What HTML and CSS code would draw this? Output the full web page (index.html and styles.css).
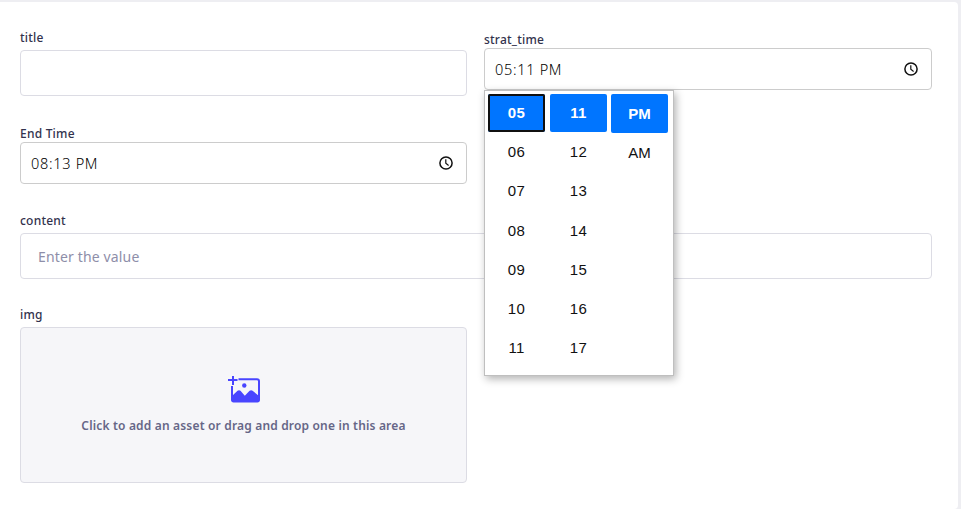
FILE: index.html
```html
<!DOCTYPE html>
<html lang="en">
<head>
<meta charset="utf-8">
<title>Edit entry</title>
<link rel="stylesheet" href="styles.css">
</head>
<body>
<main class="card">
  <form class="form">
    <div class="field field-title">
      <label class="label">title</label>
      <div class="input"></div>
    </div>
    <div class="field field-start">
      <label class="label">strat_time</label>
      <div class="time"><span>05:11 PM</span>
        <svg class="clock" viewBox="0 0 16 16"><circle cx="8" cy="8" r="6.1"/><path d="M7.8 4.3v4l2.8 2.1"/></svg>
      </div>
      <div class="picker">
        <div class="column">
          <div class="cell selected focused">05</div><div class="cell">06</div><div class="cell">07</div><div class="cell">08</div><div class="cell">09</div><div class="cell">10</div><div class="cell">11</div>
        </div>
        <div class="column">
          <div class="cell selected">11</div><div class="cell">12</div><div class="cell">13</div><div class="cell">14</div><div class="cell">15</div><div class="cell">16</div><div class="cell">17</div>
        </div>
        <div class="column period">
          <div class="cell selected">PM</div><div class="cell">AM</div>
        </div>
      </div>
    </div>
    <div class="field field-end">
      <label class="label">End Time</label>
      <div class="time"><span>08:13 PM</span>
        <svg class="clock" viewBox="0 0 16 16"><circle cx="8" cy="8" r="6.1"/><path d="M7.8 4.3v4l2.8 2.1"/></svg>
      </div>
    </div>
    <div class="field field-content">
      <label class="label">content</label>
      <div class="input"><span class="placeholder">Enter the value</span></div>
    </div>
    <div class="field field-img">
      <label class="label">img</label>
      <div class="drop">
        <svg class="asset" viewBox="0 0 34 28"><path class="fill" d="M4 1h2v3h3.5v2H6v4H4V6H0V4h4z"/><path class="frame" d="M10.5 4.2H29a2 2 0 0 1 2 2V25a1.5 1.5 0 0 1-1.5 1.5h-24A1.5 1.5 0 0 1 4 25V11"/><circle class="fill" cx="16.3" cy="10.5" r="2.2"/><path class="fill" d="M4 21l5.5-5.2q1.5-1.2 3 0l4.3 5 4.8-5q1.500-1.200 3 0L31 21v4.500l-1.500 1.500h-24L4 25.500z"/></svg>
        <span class="hint">Click to add an asset or drag and drop one in this area</span>
      </div>
    </div>
  </form>
</main>
</body>
</html>
```

FILE: styles.css
```css
* { box-sizing: border-box; }
body {
  margin: 0;
  height: 509px;
  overflow: hidden;
  background: #eeeef2;
  font-family: "Noto Sans", "Open Sans", sans-serif;
  color: #32324d;
}
.card {
  width: 958px;
  height: 507px;
  margin-top: 2px;
  padding: 26px 26px 0 20px;
  background: #fff;
  border-radius: 0 4px 4px 0;
}
.form {
  display: grid;
  grid-template-columns: 447px 448px;
  grid-template-rows: 96px 91px 94px 161px;
  column-gap: 17px;
}
.field { position: relative; }
.field-content { grid-column: 1 / 3; }
.label {
  display: block;
  height: 16px;
  line-height: 18px;
  font-size: 12px;
  font-weight: 500;
  letter-spacing: .22px;
  white-space: nowrap;
}
.field-title .label { margin: 1px 0 5px; }
.field-start .label { margin: 3px 0 1px; }
.field-end .label { margin: 1px 0; }
.field-content .label { margin-bottom: 5px; margin-top: -3px; }
.field-img .label { margin-bottom: 5px; margin-top: -3px; }
.input {
  display: flex;
  align-items: center;
  height: 46px;
  padding: 0 17px;
  border: 1px solid #dcdce4;
  border-radius: 4px;
  background: #fff;
}
.placeholder { font-size: 14px; letter-spacing: .15px; color: #8e8ea9; }
.time {
  display: flex;
  align-items: center;
  justify-content: space-between;
  height: 42px;
  padding: 0 12px 0 10px;
  border: 1px solid #ccc;
  border-radius: 4px;
  background: #fff;
  color: #000;
  font-size: 14.5px;
  font-weight: 350;
  letter-spacing: .7px;
}
.clock { width: 16px; height: 16px; fill: none; stroke: #111; stroke-width: 1.5; }
.clock path { stroke-width: 1.2; }
.picker {
  position: absolute;
  z-index: 2;
  top: 62px;
  left: 0;
  display: flex;
  gap: 5px;
  width: 190px;
  height: 286px;
  padding: 3px;
  border: 1px solid #bfbfbf;
  background: #fff;
  box-shadow: 2px 3px 8px rgba(0, 0, 0, .3);
  color: #111;
  font: 15px "Liberation Sans", sans-serif;
}
.column { display: flex; flex-direction: column; gap: 1.2px; width: 57px; }
.column.period { margin-left: -1px; }
.cell {
  height: 38px;
  line-height: 38px;
  text-align: center;
  border-radius: 2px;
  letter-spacing: .3px;
}
.period .cell { height: 39px; line-height: 40px; letter-spacing: 0; }
.period .cell:not(.selected) { line-height: 38px; }
.selected { background: #0075ff; color: #fff; font-weight: 700; }
.focused { box-shadow: inset 0 0 0 2px #101010; }
.drop {
  display: flex;
  flex-direction: column;
  align-items: center;
  height: 156px;
  padding-top: 47px;
  border: 1px solid #dcdce4;
  border-radius: 4px;
  background: #f6f6f9;
}
.asset { width: 34px; height: 28px; margin-left: 2px; }
.asset .fill { fill: #4945ff; }
.asset .frame { fill: none; stroke: #4945ff; stroke-width: 2; }
.hint {
  margin-top: 14px;
  line-height: 18px;
  font-size: 12px;
  font-weight: 600;
  letter-spacing: .17px;
  color: #666687;
  white-space: nowrap;
}
```
